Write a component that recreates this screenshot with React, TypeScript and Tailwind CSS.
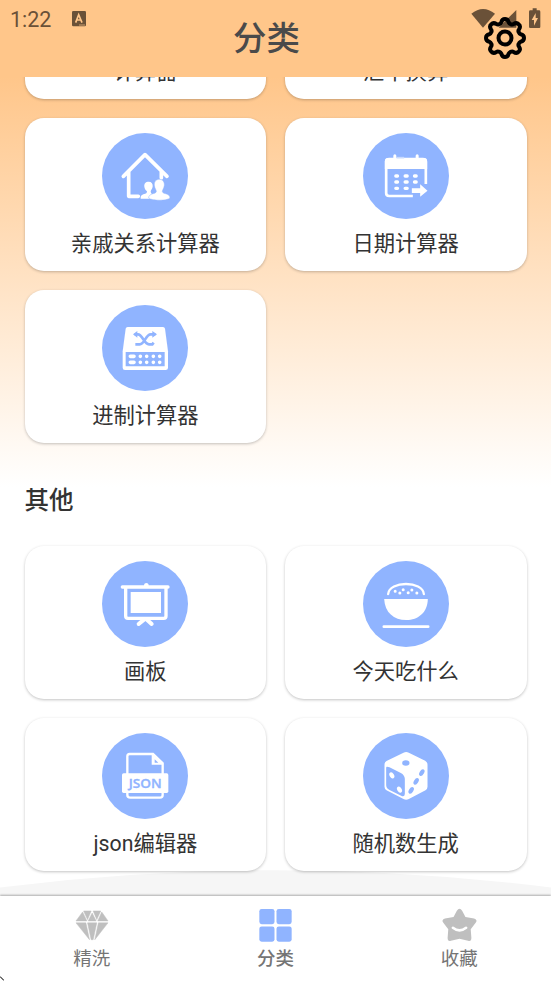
import type { ReactNode } from 'react';

type Tool = {
  name: string;
  icon?: ReactNode;
  viewBox?: string;
};

const calculators: Tool[] = [
  { name: '计算器' },
  { name: '汇率换算' },
  {
    name: '亲戚关系计算器',
    viewBox: '37 39 258 258',
    icon: (
      <>
        <path
          d="M101 169 L166 104 L232 169 M117 156 V229 H146 M215 153 V174"
          fill="none"
          stroke="#fff"
          strokeWidth="11"
          strokeLinecap="round"
          strokeLinejoin="round"
        />
        <path
          d="M164 200 C163 189 169 185 177 185 C186 185 190 191 189 200 C188 207 183 210 183 215 C184 220 190 222 190 236 H153 C152 229 155 225 161 223 C170 221 172 219 172 214 C168 211 165 206 164 200Z"
          fill="#fff"
        />
        <path
          d="M194 196 C193 185 199 178 209 178 C219 178 225 186 224 196 C223 206 218 209 218 215 C220 223 241 219 241 234 C232 243 187 243 177 234 C177 219 198 223 200 215 C200 209 195 206 194 196Z"
          fill="#fff"
          stroke="#90b4ff"
          strokeWidth="1.5"
        />
      </>
    ),
  },
  {
    name: '日期计算器',
    viewBox: '52.5 39 258 258',
    icon: (
      <>
        <path
          d="M202 228 H131 Q122 228 122 219 V126 Q122 117 131 117 H232 Q241 117 241 126 V192"
          fill="none"
          stroke="#fff"
          strokeWidth="8"
        />
        <path d="M118 147 V124 Q118 114 128 114 H235 Q245 114 245 124 V147Z" fill="#fff" />
        <path d="M148 107 V118 M215 107 V118" stroke="#fff" strokeWidth="9" strokeLinecap="round" />
        <path d="M153 113 H176" stroke="#c9dbff" strokeWidth="5" />
        <path
          d="M151 168 H156 M179 168 H185 M207 168 H212 M151 186 H156 M179 186 H185 M207 186 H212 M151 205 H156 M179 205 H185"
          stroke="#fff"
          strokeWidth="10"
          strokeLinecap="round"
        />
        <path d="M199 205 H224 V193 L246 212 L224 230 V219 H199Z" fill="#fff" />
      </>
    ),
  },
  {
    name: '进制计算器',
    viewBox: '37 30 258 258',
    icon: (
      <>
        <path
          d="M114 96 H220 Q225 96 226 101 L235 169 V218 Q235 225 228 225 H106 Q99 225 99 218 V169 L108 101 Q109 96 114 96Z"
          fill="#fff"
        />
        <path
          d="M135 118 H145 C158 118 163 148 178 148 H188 L192 143 M137 148 H150 C165 148 168 118 183 118 H197"
          fill="none"
          stroke="#90b4ff"
          strokeWidth="8"
        />
        <path d="M130 118 L143 108 V128Z M202 118 L188 108 V128Z" fill="#90b4ff" />
        <path d="M108 171 H225 V214 H108Z" fill="#90b4ff" />
        <path
          d="M122 184 H133 M122 202 H133 M152 184 H152.1 M171 184 H171.1 M191 184 H191.1 M210 184 H210.1 M152 202 H152.1 M171 202 H171.1 M191 202 H191.1 M210 202 H210.1"
          stroke="#fff"
          strokeWidth="11"
          strokeLinecap="round"
        />
      </>
    ),
  },
];

const others: Tool[] = [
  {
    name: '画板',
    viewBox: '37 33 258 258',
    icon: (
      <>
        <path
          d="M98 111 H235 M108 113 V198 Q108 205 115 205 H222 Q229 205 229 198 V113"
          fill="none"
          stroke="#fff"
          strokeWidth="10"
          strokeLinecap="round"
        />
        <path d="M163 108 V104 Q164 99 170 99 Q176 99 177 104 V108Z" fill="#fff" />
        <path d="M123 126 H214 V189 H123Z" fill="#fff" />
        <path d="M163 209 L147 222 M172 209 L186 222" stroke="#fff" strokeWidth="12" strokeLinecap="round" />
      </>
    ),
  },
  {
    name: '今天吃什么',
    viewBox: '52.5 33 258 258',
    icon: (
      <>
        <path
          d="M128 132 C131 92 232 92 235 132"
          fill="none"
          stroke="#fff"
          strokeWidth="7"
          strokeLinecap="round"
        />
        <path
          d="M149 124 H149.1 M163 129 H163.1 M173 119 H173.1 M188 128 H188.1 M199 120 H199.1 M214 129 H214.1"
          stroke="#fff"
          strokeWidth="9"
          strokeLinecap="round"
        />
        <path d="M116 147 H247 C246 188 218 210 182 210 C145 210 118 188 116 147Z" fill="#fff" />
        <path d="M115 230 H248" stroke="#fff" strokeWidth="8" strokeLinecap="round" />
      </>
    ),
  },
  {
    name: 'json编辑器',
    viewBox: '37 33 258 258',
    icon: (
      <>
        <path
          d="M113 158 V103 Q113 96 120 96 H190 L219 124 V219 Q219 227 211 227 H122 Q113 227 113 219 V208"
          fill="none"
          stroke="#fff"
          strokeWidth="7"
        />
        <path d="M186 94 L221 128 H186Z" fill="#fff" />
        <path d="M195 112 L206 122 H195Z" fill="#90b4ff" />
        <rect x="97" y="154" width="139" height="59" rx="5" fill="#fff" />
        <path d="M118 217 H213" stroke="#90b4ff" strokeWidth="7" />
        <text
          x="117"
          y="197"
          textLength="99"
          lengthAdjust="spacingAndGlyphs"
          fill="#90b4ff"
          fontFamily="Open Sans, sans-serif"
          fontSize="39"
          fontWeight="600"
          stroke="#90b4ff"
          strokeWidth="1"
        >
          JSON
        </text>
      </>
    ),
  },
  {
    name: '随机数生成',
    viewBox: '52.5 33 258 258',
    icon: (
      <>
        <path
          d="M174 92 Q182 88 190 92 L239 116 Q246 120 246 128 V194 Q246 201 240 205 L190 231 Q182 235 174 231 L123 205 Q117 201 117 194 V128 Q117 120 123 117Z"
          fill="#fff"
        />
        <path
          d="M122 138 C122 132 127 134 132 136 L166 153 Q177 159 178 170 V216 Q177 226 167 221 L132 204 Q122 199 122 189Z"
          fill="#90b4ff"
        />
        <ellipse cx="181" cy="123" rx="11" ry="8" fill="#90b4ff" />
        <g fill="#fff">
          <ellipse cx="139" cy="160" rx="6.5" ry="10" transform="rotate(-30 139 160)" />
          <ellipse cx="162" cy="203" rx="6.5" ry="10" transform="rotate(-30 162 203)" />
        </g>
        <g fill="#90b4ff">
          <ellipse cx="229" cy="152" rx="6.5" ry="11" transform="rotate(32 229 152)" />
          <ellipse cx="212" cy="178" rx="6.5" ry="11" transform="rotate(32 212 178)" />
          <ellipse cx="197" cy="205" rx="6.5" ry="11" transform="rotate(32 197 205)" />
        </g>
      </>
    ),
  },
];

function ToolCard({ tool }: { tool: Tool }) {
  return (
    <div className="flex h-[153px] flex-col items-center rounded-[19px] bg-white pt-[15px] shadow-[0_1px_3px_rgba(0,0,0,0.24)]">
      <div className="h-[86px] w-[86px] shrink-0 rounded-full bg-[#90b4ff]">
        {tool.icon && (
          <svg viewBox={tool.viewBox} className="h-[86px] w-[86px]">
            {tool.icon}
          </svg>
        )}
      </div>
      <div className="mt-[9px] whitespace-nowrap text-[21.3px] leading-[31px] text-[#333333]">
        {tool.name}
      </div>
    </div>
  );
}

function ToolGrid({ tools }: { tools: Tool[] }) {
  return (
    <div className="grid grid-cols-2 gap-x-[18.5px] gap-y-[19px]">
      {tools.map((tool) => (
        <ToolCard key={tool.name} tool={tool} />
      ))}
    </div>
  );
}

function StatusBar() {
  return (
    <div className="absolute inset-x-0 top-0 flex h-[38px] items-center pl-[10px] text-[#6a5138]">
      <span className="pt-[1px] font-[Roboto,sans-serif] text-[21.5px] leading-[38px]">1:22</span>
      <svg viewBox="0 0 42 48" className="ml-[21px] h-4 w-[14px]">
        <rect width="42" height="46" rx="4" fill="currentColor" />
        <path d="M11 35 L20 11 L30 35 M14 27 H26" fill="none" stroke="#ffc68a" strokeWidth="5" />
        <path d="M22 42 H38" stroke="#ffc68a" strokeWidth="3" strokeDasharray="4 2" />
      </svg>
      <svg viewBox="590 20 210 65" className="absolute left-[471.3px] top-[6.5px] h-[21.7px] w-[70px]">
        <path d="M591 40 Q626 12 662 40 L626 82Z" fill="currentColor" />
        <path d="M726 29 V82 H673Z" fill="currentColor" />
        <path
          d="M775 24 H787 V30 H794 Q798 30 798 34 V79 Q798 83 794 83 H768 Q764 83 764 79 V34 Q764 30 768 30 H775Z"
          fill="currentColor"
        />
        <path d="M784 38 L772 59 H779 V76 L791 53 H784Z" fill="#ffc68a" />
      </svg>
    </div>
  );
}

function GearIcon() {
  return (
    <svg
      viewBox="-63 -63 126 126"
      className="absolute left-[484px] top-[17px] h-[42px] w-[42px]"
      fill="none"
      stroke="#000"
      strokeWidth="12"
      strokeLinejoin="round"
    >
      <path d="M-11 -47 Q-9 -57 0 -57 Q9 -57 11 -47 Q13 -43 18 -41 Q22 -39 26 -42 Q35 -48 41 -41 Q48 -35 42 -26 Q39 -22 41 -18 Q43 -13 47 -11 Q57 -9 57 0 Q57 9 47 11 Q43 13 41 18 Q39 22 42 26 Q48 35 41 41 Q35 48 26 42 Q22 39 18 41 Q13 43 11 47 Q9 57 0 57 Q-9 57 -11 47 Q-13 43 -18 41 Q-22 39 -26 42 Q-35 48 -41 41 Q-48 35 -42 26 Q-39 22 -41 18 Q-43 13 -47 11 Q-57 9 -57 0 Q-57 -9 -47 -11 Q-43 -13 -41 -18 Q-39 -22 -42 -26 Q-48 -35 -41 -41 Q-35 -48 -26 -42 Q-22 -39 -18 -41 Q-13 -43 -11 -47Z" />
      <circle r="19.5" />
    </svg>
  );
}

const tabs = [
  {
    label: '精洗',
    icon: (
      <g fill="#bfbfbf" stroke="#bfbfbf" strokeWidth="1.5" transform="translate(2 3)">
        <path d="M21 6 L34 33 H1Z M24 3 H47 L36 29Z M53 3 H76 L64 29Z M79 6 L98 33 H67Z M50 9 L62 33 H38Z" />
        <path d="M1 39 H31 L42 90Z M36 39 H64 L53 90 H47Z M69 39 H98 L58 90Z" />
      </g>
    ),
  },
  {
    label: '分类',
    active: true,
    icon: (
      <g fill="#90b4ff">
        <rect x="1" y="0" width="46" height="46" rx="7" />
        <rect x="53" y="0" width="46" height="46" rx="7" />
        <rect x="1" y="53" width="46" height="46" rx="7" />
        <rect x="53" y="53" width="46" height="46" rx="7" />
      </g>
    ),
  },
  {
    label: '收藏',
    icon: (
      <>
        <path
          d="M42 5 Q50 -6 58 5 L68 24 L94 29 Q106 33 99 42 L84 61 L86 88 Q86 99 76 96 L50 90 L24 96 Q14 99 14 88 L16 61 L1 42 Q-6 33 6 29 L32 24Z"
          fill="#bfbfbf"
        />
        <path d="M30 57 Q50 73 70 57" fill="none" stroke="#fff" strokeWidth="8" strokeLinecap="round" />
      </>
    ),
  },
];

function TabBar() {
  return (
    <nav className="relative grid h-[85px] shrink-0 grid-cols-3 bg-white shadow-[0_-1px_2px_rgba(0,0,0,0.3)]">
      {tabs.map((tab) => (
        <div key={tab.label} className="flex flex-col items-center pt-[13px] text-[#757575]">
          <svg viewBox="0 0 100 100" className="h-[33px] w-[33px] overflow-visible">
            {tab.icon}
          </svg>
          <span
            className={
              tab.active
                ? 'mt-[3px] text-[18.5px] font-medium leading-[28px]'
                : 'mt-[3px] text-[18.5px] leading-[28px]'
            }
          >
            {tab.label}
          </span>
        </div>
      ))}
    </nav>
  );
}

export default function App() {
  return (
    <div className="relative flex h-[981px] w-[551px] flex-col overflow-hidden bg-white font-[Roboto,'Noto_Sans_CJK_SC',sans-serif]">
      <header className="relative flex h-[77px] shrink-0 justify-center bg-[#ffc68a] pr-[18px]">
        <h1 className="mt-[14px] text-[33.5px] font-medium leading-[50px] text-[#4a4a4a]">分类</h1>
        <StatusBar />
        <GearIcon />
      </header>

      <main className="relative min-h-0 flex-1 overflow-hidden bg-[linear-gradient(to_bottom,#ffc68a_0px,#ffffff_410px)]">
        <svg viewBox="0 0 551 26" className="absolute inset-x-0 bottom-0 h-[26px] w-[551px]">
          <path d="M0 17.5 Q275.5 -17 551 17.5 V26 H0Z" fill="#f6f6f6" />
        </svg>
        <div className="relative -mt-[131px] px-[24.5px]">
          <ToolGrid tools={calculators} />
          <h2 className="mb-[27px] mt-[39px] text-[24.5px] font-medium leading-[37px] text-[#333333]">
            其他
          </h2>
          <ToolGrid tools={others} />
        </div>
      </main>

      <TabBar />

      <svg viewBox="0 0 12 15" className="absolute bottom-0 left-0 h-[5px] w-[4px]">
        <path d="M0 3 H3 V6 H6 V9 H9 V12 H12" fill="none" stroke="#000" strokeWidth="2" />
      </svg>
    </div>
  );
}
